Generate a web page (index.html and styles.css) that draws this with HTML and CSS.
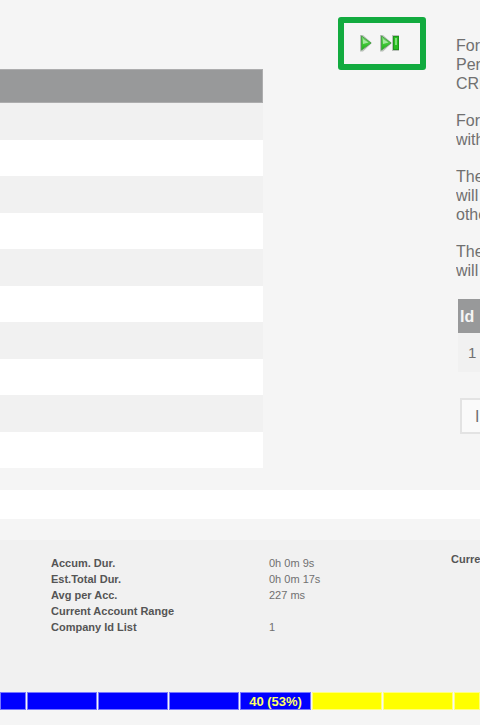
FILE: index.html
```html
<!DOCTYPE html>
<html lang="en">
<head>
    <meta charset="UTF-8">
    <meta name="viewport" content="width=device-width, initial-scale=1.0">
    <title>Run progress</title>
    <link rel="stylesheet" href="styles.css">
</head>
<body>
    <div class="top">
        <table class="list">
            <thead>
                <tr><th></th></tr>
            </thead>
            <tbody>
                <tr><td></td></tr>
                <tr><td></td></tr>
                <tr><td></td></tr>
                <tr><td></td></tr>
                <tr><td></td></tr>
                <tr><td></td></tr>
                <tr><td></td></tr>
                <tr><td></td></tr>
                <tr><td></td></tr>
                <tr><td></td></tr>
            </tbody>
        </table>

        <div class="controls">
            <button class="step" aria-label="Next">
                <svg width="14" height="18" viewBox="0 0 14 18">
                    <defs>
                        <linearGradient id="green" x1="0" y1="0" x2="0" y2="1">
                            <stop offset="0" stop-color="#7fd67a"/>
                            <stop offset="0.5" stop-color="#45cb3a"/>
                            <stop offset="1" stop-color="#1fb01a"/>
                        </linearGradient>
                    </defs>
                    <path d="M1 1H4L13 9L4 17.500H1Z" fill="#b9c0b9"/>
                    <path d="M2.500 2V16L12 9Z" fill="url(#green)" stroke="#4aa548"/>
                    <path d="M4 5L9.500 8.500L4 10Z" fill="#a5e8a0"/>
                </svg>
            </button>
            <button class="step" aria-label="Last">
                <svg width="21" height="18" viewBox="0 0 21 18">
                    <path d="M1 1H4L13 9L4 17.500H1Z" fill="#b9c0b9"/>
                    <path d="M2.500 2V16L12 9Z" fill="url(#green)" stroke="#4aa548"/>
                    <path d="M4 5L9.500 8.500L4 10Z" fill="#a5e8a0"/>
                    <rect x="13" y="1" width="7" height="16" fill="#b9c0b9"/>
                    <rect x="14.500" y="2.500" width="5" height="13" fill="#28bd20" stroke="#1f961c"/>
                    <rect x="16" y="4" width="2" height="7" fill="#7fdd78"/>
                </svg>
            </button>
        </div>

        <div class="info">
            <p>For<br>Per<br>CRM</p>
            <p>For<br>with</p>
            <p>The<br>will<br>othe</p>
            <p>The<br>will</p>
            <table class="ids">
                <thead>
                    <tr><th>Id</th></tr>
                </thead>
                <tbody>
                    <tr><td>1</td></tr>
                </tbody>
            </table>
            <button class="action">I</button>
        </div>
    </div>

    <div class="band"></div>

    <div class="stats">
        <dl>
            <dt>Accum. Dur.</dt><dd>0h 0m 9s</dd>
            <dt>Est.Total Dur.</dt><dd>0h 0m 17s</dd>
            <dt>Avg per Acc.</dt><dd>227 ms</dd>
            <dt>Current Account Range</dt><dd></dd>
            <dt>Company Id List</dt><dd>1</dd>
        </dl>
        <strong class="current">Curre</strong>
    </div>

    <div class="progress">
        <span class="done"></span>
        <span class="done"></span>
        <span class="done"></span>
        <span class="done"></span>
        <span class="done">40 (53%)</span>
        <span></span>
        <span></span>
        <span></span>
    </div>
</body>
</html>
```

FILE: styles.css
```css
body {
    margin: 0;
    background: #f5f5f5;
    color: #707070;
    font-family: "Liberation Sans", Arial, sans-serif;
    overflow-x: hidden;
}
button {
    padding: 0;
    font: inherit;
    color: inherit;
}
table {
    border-collapse: collapse;
}

/* upper part: list, step buttons, notes */
.top {
    display: flex;
    align-items: flex-start;
}
.list {
    flex: 1;
    margin-top: 69px;
}
.list, .list thead, .list tbody {
    display: block;
}
.list tr, .list th, .list td {
    display: block;
    box-sizing: border-box;
    padding: 0;
}
.list th {
    height: 34px;
    background: #98999a;
    border: 1px solid #adadae;
    border-left: 0;
}
.list tbody tr {
    height: 36px;
    background: #fff;
}
.list tbody tr:nth-child(odd) {
    height: 37px;
    background: #f1f1f1;
}
.controls {
    display: flex;
    align-items: flex-start;
    box-sizing: border-box;
    width: 88px;
    height: 53px;
    margin: 17px 30px 0 75px;
    padding: 11px 0 0 15px;
    gap: 6px;
    border: 6px solid #12ab3f;
    border-radius: 3px;
}
.step {
    display: flex;
    border: 0;
    background: none;
}
.info {
    width: 5%;
    padding-top: 36px;
    font-size: 16px;
    line-height: 19px;
    white-space: nowrap;
    overflow: hidden;
}
.info p {
    margin: 0 0 18px;
}
.ids {
    width: 60px;
    margin: 19px 0 0 2px;
}
.ids th, .ids td {
    box-sizing: border-box;
    padding: 0 2px;
    text-align: left;
}
.ids th {
    height: 34px;
    background: #98999a;
    color: #f5f5f5;
}
.ids td {
    height: 39px;
    padding-left: 10px;
    background: #f1f1f1;
    font-size: 15px;
}
.action {
    width: 60px;
    height: 36px;
    margin: 26px 0 0 4px;
    padding-left: 13px;
    border: 2px solid #e3e3e3;
    background: #fafafa;
    text-align: left;
}

.band {
    height: 29px;
    margin: 22px 0 21px;
    background: #fff;
}

/* run statistics */
.stats {
    display: flex;
    box-sizing: border-box;
    min-height: 152px;
    padding: 15px 0 0 51px;
    background: #f1f1f1;
    font-size: 11px;
    line-height: 16px;
}
.stats dl {
    flex: 1;
    display: grid;
    grid-template-columns: 218px 1fr;
    grid-auto-rows: 16px;
    margin: 0;
}
.stats dt {
    font-weight: bold;
    color: #555;
}
.stats dd {
    margin: 0;
}
.current {
    width: 29px;
    margin-top: -4px;
    color: #555;
    white-space: nowrap;
}

/* progress bar */
.progress {
    display: grid;
    grid-template-columns: 26px repeat(6, 1fr) 26px;
    gap: 1px;
    margin-bottom: 15px;
}
.progress span {
    box-sizing: border-box;
    height: 18px;
    border: 1px solid #ffff80;
    background: #ff0;
    font-size: 13px;
    font-weight: bold;
    line-height: 17px;
    text-align: center;
}
.progress .done {
    border-color: #7878ff;
    background: #00f;
    color: #ffff66;
}
```
